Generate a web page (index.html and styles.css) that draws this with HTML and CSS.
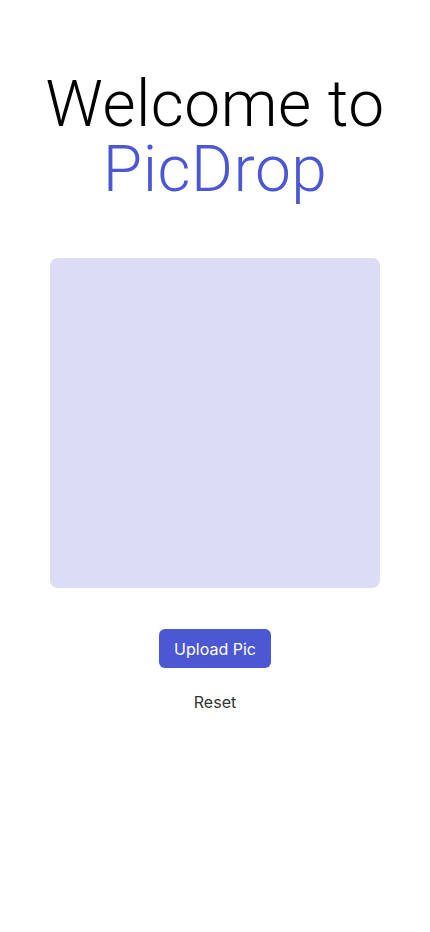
FILE: index.html
```html
<!DOCTYPE html>
<html lang="en">
<head>
<meta charset="utf-8">
<title>PicDrop</title>
<link rel="stylesheet" href="styles.css">
</head>
<body>
<main class="page">
  <h1 class="title"><span class="line">Welcome to</span><span class="line brand">PicDrop</span></h1>
  <div class="drop"></div>
  <button class="upload">Upload Pic</button>
  <button class="reset">Reset</button>
</main>
</body>
</html>
```
FILE: styles.css
```css
* { box-sizing: border-box; }
html, body { margin: 0; padding: 0; background: #fff; }
body { font-family: Inter, "Liberation Sans", sans-serif; }
.page { display: flex; flex-direction: column; align-items: center; padding-top: 72px; }
.title { margin: 0; display: flex; flex-direction: column; align-items: center; font-family: Roboto, "Liberation Sans", sans-serif; font-weight: 300; font-size: 64px; line-height: 65px; color: #000; letter-spacing: 0.5px; }
.brand { color: #4c57d4; }
.drop { width: 330px; height: 330px; margin-top: 56px; background: #dcdcf5; border-radius: 8px; }
.upload { margin-top: 41px; height: 39px; width: 112px; border: 0; border-radius: 6px; background: #4c57d4; color: #fff; font-family: Inter, sans-serif; font-size: 16px; padding: 0; }
.reset { margin-top: 24px; border: 0; background: none; color: #333; font-family: Inter, sans-serif; font-size: 16px; padding: 0; }
```
